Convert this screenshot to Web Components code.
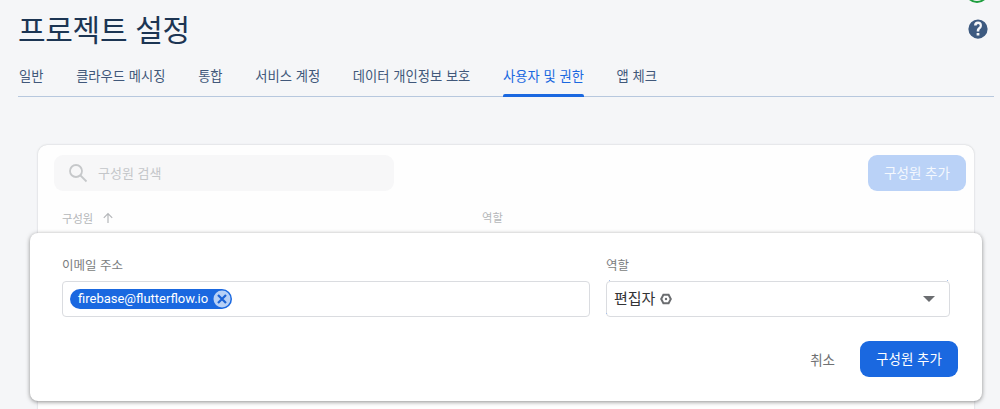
<!DOCTYPE html>
<html lang="ko">
<head>
<meta charset="utf-8">
<title>프로젝트 설정</title>
<style>
  html, body { margin: 0; height: 100%; overflow: hidden; background: #f5f6f8; }
  body { font-family: "Noto Sans CJK KR", "Noto Sans", sans-serif; }
</style>
</head>
<body>
<settings-page>
  <settings-tabs slot="tabs">
    <tab-item>일반</tab-item>
    <tab-item>클라우드 메시징</tab-item>
    <tab-item>통합</tab-item>
    <tab-item>서비스 계정</tab-item>
    <tab-item>데이터 개인정보 보호</tab-item>
    <tab-item active>사용자 및 권한</tab-item>
    <tab-item>앱 체크</tab-item>
  </settings-tabs>
  <members-card slot="card"></members-card>
  <add-member-dialog slot="dialog"></add-member-dialog>
</settings-page>

<script>
class SettingsPage extends HTMLElement {
  constructor() {
    super();
    this.attachShadow({ mode: "open" });
  }

  connectedCallback() {
    this.shadowRoot.innerHTML = `
      <style>
        :host { display: block; position: relative; width: 1000px; height: 409px; overflow: hidden; color: #1f3a5a; }
        header { display: flex; justify-content: space-between; height: 64px; padding: 0 6px 0 18px; }
        h1 { margin: 7px 0 0; font-size: 30px; font-weight: 400; line-height: 42px; letter-spacing: -0.3px; color: #1c3553; }
        .side { position: relative; width: 32px; }
        .avatar { position: absolute; top: -21px; left: 3px; width: 24px; height: 24px; box-sizing: border-box; border: 2.5px solid #1e9e3e; border-radius: 50%; }
        .help { position: absolute; top: 18px; left: 5px; }
        main { padding: 48px 26px 0 38px; }
        ::slotted(add-member-dialog) { position: absolute; left: 30px; top: 233px; }
      </style>
      <header>
        <h1>프로젝트 설정</h1>
        <div class="side">
          <div class="avatar"></div>
          <svg class="help" width="22" height="22" viewBox="0 0 24 24"><path fill="#3d5a80" d="M12 1.500a10.500 10.500 0 1 0 0 21 10.500 10.500 0 0 0 0-21zm1.500 17.600h-3v-2.800h3v2.800zm2-8.100-1.100 1.100c-.8.800-1 1.400-1 2.600h-2.800v-.6c0-1.300.4-2.300 1.200-3.100l1.500-1.500c.4-.4.600-.8.600-1.300a1.700 1.700 0 0 0-3.400 0H7.700a4.300 4.300 0 0 1 8.600 0c0 1.100-.3 1.800-.8 2.800z"/></svg>
        </div>
      </header>
      <slot name="tabs"></slot>
      <main><slot name="card"></slot></main>
      <slot name="dialog"></slot>
    `;
  }
}

class SettingsTabs extends HTMLElement {
  constructor() {
    super();
    this.attachShadow({ mode: "open" });
  }

  connectedCallback() {
    this.shadowRoot.innerHTML = `
      <style>
        :host { display: flex; gap: 32.67px; height: 32px; margin: 0 6px 0 18px; padding-left: 1px; border-bottom: 1px solid #b7c8de; }
      </style>
      <slot></slot>
    `;
  }
}

class TabItem extends HTMLElement {
  constructor() {
    super();
    this.attachShadow({ mode: "open" });
  }

  connectedCallback() {
    this.shadowRoot.innerHTML = `
      <style>
        :host { display: block; position: relative; font-size: 13.3px; line-height: 24px; color: #41587a; white-space: nowrap; }
        :host([active]) { color: #1a68e0; }
        :host([active])::after { content: ""; position: absolute; left: 0; right: 0; bottom: -1px; height: 3px; border-radius: 2px 2px 0 0; background: #1a68e0; }
      </style>
      <slot></slot>
    `;
  }
}

class MembersCard extends HTMLElement {
  constructor() {
    super();
    this.attachShadow({ mode: "open" });
  }

  connectedCallback() {
    this.shadowRoot.innerHTML = `
      <style>
        :host { display: block; width: 936px; height: 300px; box-sizing: border-box; padding: 10px 8px 0 16px; background: #fefefe; border-radius: 9px; box-shadow: 0 0 2px rgba(60,64,67,.28); }
        .top { display: flex; justify-content: space-between; }
        .search { display: flex; align-items: center; gap: 10px; width: 340px; height: 36px; box-sizing: border-box; padding: 0 0 2px 14px; background: #f7f7f8; border-radius: 9px; font-size: 13px; color: #c4c6c9; }
        .search svg { margin-top: 2px; }
        .add { width: 98px; height: 36px; line-height: 35px; text-align: center; background: #bad2f7; color: #f4f8fe; border-radius: 9px; font-size: 13.500px; }
        .heads { display: flex; padding: 18px 0 0 8px; font-size: 11.300px; line-height: 18px; color: #b5b7ba; }
        .col { display: flex; align-items: center; gap: 9px; width: 420px; }
        .role { margin-top: -1px; }
      </style>
      <div class="top">
        <div class="search">
          <svg width="20" height="20" viewBox="0 0 20 20" fill="none" stroke="#c6c8ca" stroke-width="1.8"><circle cx="8" cy="8" r="6"/><path d="M12.500 12.500 18.500 18.500"/></svg>
          <span>구성원 검색</span>
        </div>
        <div class="add">구성원 추가</div>
      </div>
      <div class="heads">
        <div class="col">구성원
          <svg width="12" height="12" viewBox="0 0 12 12" fill="none" stroke="#b5b7ba" stroke-width="1.2"><path d="M6 11V1.500M1.800 5.800 6 1.500l4.200 4.300"/></svg>
        </div>
        <div class="role">역할</div>
      </div>
    `;
  }
}

class AddMemberDialog extends HTMLElement {
  constructor() {
    super();
    this.attachShadow({ mode: "open" });
  }

  connectedCallback() {
    this.shadowRoot.innerHTML = `
      <style>
        :host { display: block; width: 952px; height: 168px; box-sizing: border-box; padding: 20px 24px 0 32px; background: #fff; border-radius: 8px; box-shadow: 0 1px 4px rgba(50,50,50,.55); }
        .fields { display: grid; grid-template-columns: 528px 344px; column-gap: 16px; }
        label { display: block; font-size: 12.500px; line-height: 20px; padding-top: 2px; margin-bottom: 6px; color: #7b7d80; }
        .box { height: 36px; box-sizing: border-box; border: 1px solid #dadce0; border-radius: 4px; display: flex; align-items: center; }
        .emails { padding-left: 7px; }
        .chip { display: flex; align-items: center; height: 20px; padding: 0 0 0 8px; background: #1a68e0; color: #fff; border-radius: 10px; font: 13px/20px Roboto, sans-serif; }
        .chip svg { margin-left: 5px; margin-right: 1px; }
        .select { position: relative; justify-content: space-between; padding: 0 14px 0 7px; font-size: 15px; color: #333436; }
        .select::before { content: ""; position: absolute; left: 2px; top: -2px; width: 1px; height: 1px; background: #a9c1ea; box-shadow: 338px 0 #a9c1ea, -3px 33px #a9c1ea; }
        .value { display: flex; align-items: center; gap: 5px; padding-bottom: 3px; }
        .value svg { margin-top: 3px; }
        .actions { display: flex; justify-content: flex-end; align-items: center; gap: 25px; margin-top: 24px; }
        .cancel { font-size: 13.500px; color: #6f7173; }
        .confirm { width: 98px; height: 36px; line-height: 35px; text-align: center; background: #1a68e0; color: #fff; border-radius: 9px; font-size: 13.500px; }
      </style>
      <div class="fields">
        <div>
          <label>이메일 주소</label>
          <div class="box emails">
            <div class="chip">firebase@flutterflow.io
              <svg width="18" height="18" viewBox="0 0 18 18"><circle cx="9" cy="9" r="8.500" fill="#b7d0f6"/><path d="M5 5 13 13M13 5 5 13" stroke="#1a62d6" stroke-width="2.200"/></svg>
            </div>
          </div>
        </div>
        <div>
          <label>역할</label>
          <div class="box select">
            <div class="value">편집자
              <svg width="12" height="12" viewBox="0 0 12 12" fill="none" stroke="#6b6d70" stroke-width="2"><path d="M3.400 1.800h5.200L10.800 6 8.600 10.200H3.400L1.200 6z"/><circle cx="6" cy="6" r="1.200" fill="#6b6d70" stroke="none"/></svg>
            </div>
            <svg width="12" height="6" viewBox="0 0 12 6"><path d="M0 0h12L6 6z" fill="#6b6d70"/></svg>
          </div>
        </div>
      </div>
      <div class="actions">
        <div class="cancel">취소</div>
        <div class="confirm">구성원 추가</div>
      </div>
    `;
  }
}

customElements.define("settings-page", SettingsPage);
customElements.define("settings-tabs", SettingsTabs);
customElements.define("tab-item", TabItem);
customElements.define("members-card", MembersCard);
customElements.define("add-member-dialog", AddMemberDialog);
</script>
</body>
</html>
